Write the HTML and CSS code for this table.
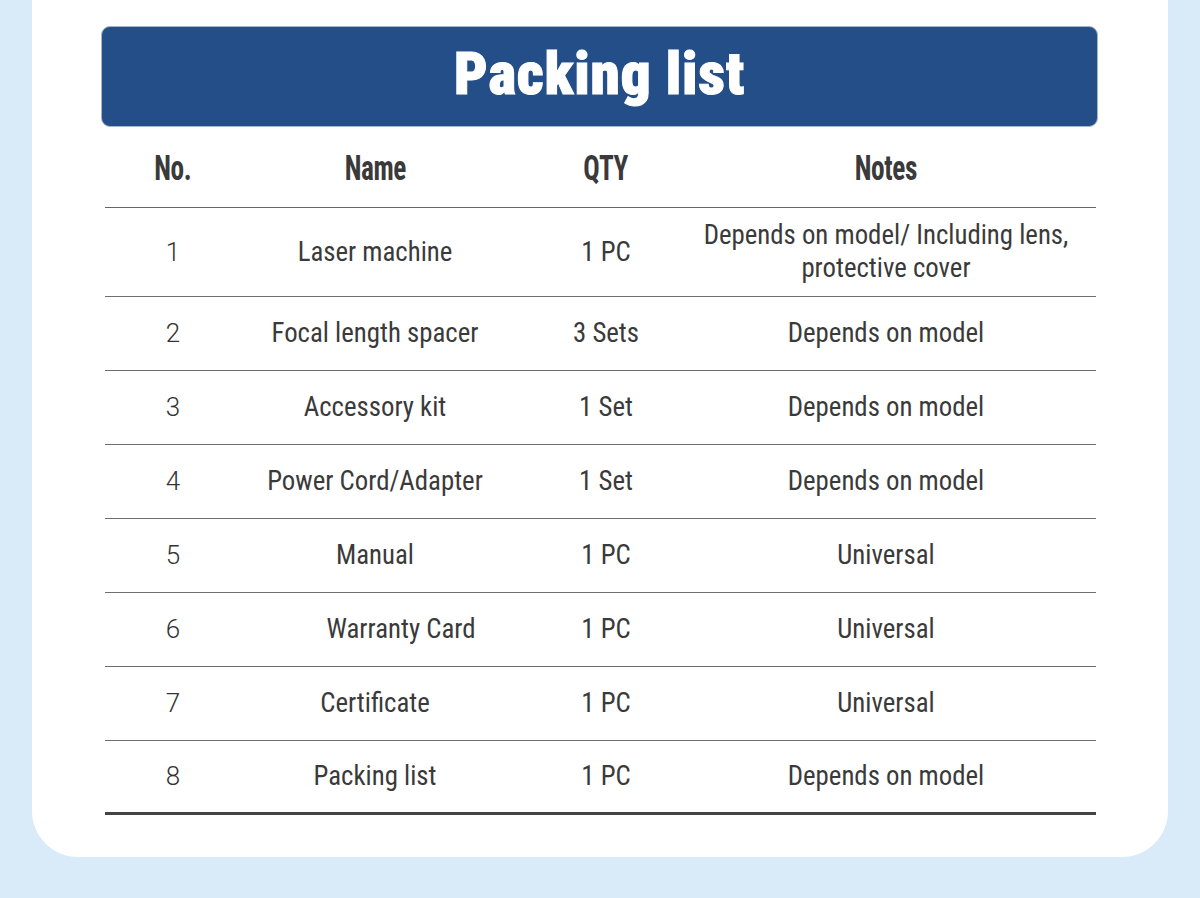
FILE: index.html
```html
<!DOCTYPE html>
<html>
<head>
<meta charset="utf-8">
<link rel="stylesheet" href="styles.css">
</head>
<body>
<div class="page">
  <div class="card">
    <div class="titlebar"><h1 class="title">Packing list</h1></div>
    <div class="table">
      <div class="row head">
        <div class="cell"><span class="hd">No.</span></div>
        <div class="cell"><span class="hd">Name</span></div>
        <div class="cell"><span class="hd">QTY</span></div>
        <div class="cell"><span class="hd">Notes</span></div>
      </div>
      <div class="row tall">
        <div class="cell num">1</div>
        <div class="cell">Laser machine</div>
        <div class="cell">1 PC</div>
        <div class="cell">Depends on model/ Including lens,<br>protective cover</div>
      </div>
      <div class="row">
        <div class="cell num">2</div>
        <div class="cell">Focal length spacer</div>
        <div class="cell">3 Sets</div>
        <div class="cell">Depends on model</div>
      </div>
      <div class="row">
        <div class="cell num">3</div>
        <div class="cell">Accessory kit</div>
        <div class="cell">1 Set</div>
        <div class="cell">Depends on model</div>
      </div>
      <div class="row">
        <div class="cell num">4</div>
        <div class="cell">Power Cord/Adapter</div>
        <div class="cell">1 Set</div>
        <div class="cell">Depends on model</div>
      </div>
      <div class="row">
        <div class="cell num">5</div>
        <div class="cell">Manual</div>
        <div class="cell">1 PC</div>
        <div class="cell">Universal</div>
      </div>
      <div class="row">
        <div class="cell num">6</div>
        <div class="cell indent">Warranty Card</div>
        <div class="cell">1 PC</div>
        <div class="cell">Universal</div>
      </div>
      <div class="row">
        <div class="cell num">7</div>
        <div class="cell">Certificate</div>
        <div class="cell">1 PC</div>
        <div class="cell">Universal</div>
      </div>
      <div class="row last">
        <div class="cell num">8</div>
        <div class="cell">Packing list</div>
        <div class="cell">1 PC</div>
        <div class="cell">Depends on model</div>
      </div>
    </div>
  </div>
</div>
</body>
</html>
```

FILE: styles.css
```css
html, body {
  margin: 0;
  padding: 0;
  background: #d9eaf8;
}
.page {
  width: 1200px;
  height: 898px;
  overflow: hidden;
}
.card {
  margin: 0 32px;
  height: 857px;
  box-sizing: border-box;
  background: #ffffff;
  border-radius: 0 0 46px 46px;
  padding: 26px 70px 0 69px;
}
.titlebar {
  height: 101px;
  box-sizing: border-box;
  background: #234e87;
  border: 1px solid #a8b5c7;
  border-radius: 9px;
  display: flex;
  align-items: center;
  justify-content: center;
}
.title {
  margin: 0;
  color: #ffffff;
  font-family: "Roboto Condensed", "Liberation Sans", sans-serif;
  font-weight: 900;
  font-size: 59px;
  line-height: 1;
  letter-spacing: 0.8px;
  padding-bottom: 6px;
  -webkit-text-stroke: 1px #ffffff;
}
.table {
  margin-left: 4px;
  width: 991px;
  color: #3a3a3a;
  font-family: "Roboto Condensed", "Liberation Sans Narrow", sans-serif;
}
.row {
  display: grid;
  grid-template-columns: 136px 268px 194px 366px 1fr;
  height: 74px;
  box-sizing: border-box;
  border-bottom: 1px solid #6e6e6e;
  align-items: center;
  font-size: 26.8px;
  line-height: 33px;
}
.cell {
  text-align: center;
}
.head {
  height: 81px;
  font-weight: 700;
  font-size: 35px;
  padding-top: 2px;
  border-bottom: 1.5px solid #666666;
}
.hd {
  display: inline-block;
  transform: scaleX(0.78);
  letter-spacing: -0.5px;
}
.tall {
  height: 89px;
}
.num {
  font-family: "Roboto", sans-serif;
  font-weight: 300;
  font-size: 26px;
  color: #333333;
}
.indent {
  padding-left: 52px;
}
.last {
  border-bottom: 3px solid #444444;
}
```
